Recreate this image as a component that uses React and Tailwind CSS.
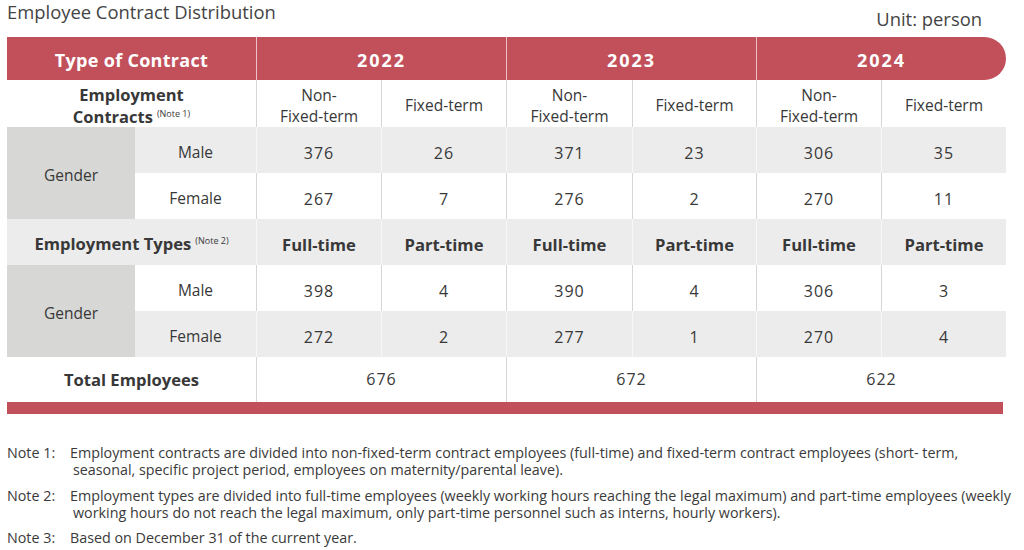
import React from "react";

const cols = "grid grid-cols-[128px_121px_125px_125px_126px_124px_125px_125px]";
const line = "border-l border-[#d6d6d6]";
const grayLine = "border-l border-[#f7f7f7]";

function Sup({ children }) {
  return (
    <span className="relative -top-[6px] ml-1 text-[9px] leading-none font-normal tracking-normal">
      {children}
    </span>
  );
}

function Cell({ className = "", children }) {
  return (
    <div className={`flex items-center justify-center text-center ${className}`}>
      {children}
    </div>
  );
}

function GenderBlock({ rows, firstGray }) {
  const [male, female] = rows;
  const bgMale = firstGray ? "bg-[#ececec]" : "bg-white";
  const bgFemale = firstGray ? "bg-white" : "bg-[#ececec]";
  const lnMale = firstGray ? grayLine : line;
  const lnFemale = firstGray ? line : grayLine;
  return (
    <>
      <Cell className="row-span-2 bg-[#d7d7d5] pt-1">Gender</Cell>
      <Cell className={`${bgMale} pt-1`}>Male</Cell>
      {male.map((v, i) => (
        <Cell key={"m" + i} className={`${bgMale} ${lnMale} pt-1.5 text-[16px] tracking-[1px]`}>
          {v}
        </Cell>
      ))}
      <Cell className={`${bgFemale} pt-1`}>Female</Cell>
      {female.map((v, i) => (
        <Cell key={"f" + i} className={`${bgFemale} ${lnFemale} pt-1.5 text-[16px] tracking-[1px]`}>
          {v}
        </Cell>
      ))}
    </>
  );
}

export default function App() {
  const years = ["2022", "2023", "2024"];
  return (
    <div className="w-[1024px] h-[550px] bg-white text-[#383838] font-['Open_Sans',sans-serif] overflow-hidden">
      <div className="flex justify-between h-[37px]">
        <h1 className="pl-[7px] text-[18.4px] leading-[24px] text-[#444]">
          Employee Contract Distribution
        </h1>
        <div className="pr-[42px] pt-[7px] text-[18.4px] leading-[24px] text-[#444]">
          Unit: person
        </div>
      </div>

      <div className="ml-[7px] w-[999px]">
        <div className="flex h-[43px] bg-[#c1505b] rounded-r-[22px] text-white font-bold">
          <div className="w-[249px] flex items-center justify-center pt-1 text-[18px] tracking-[0.3px]">
            Type of Contract
          </div>
          {years.map((y) => (
            <div
              key={y}
              className="w-[250px] border-l border-[#eec3c7] flex items-center justify-center pt-1 text-[18px] tracking-[2px]"
            >
              {y}
            </div>
          ))}
        </div>

        <div className={`${cols} grid-rows-[47px_46px_46px_46px_46px_46px_45px] text-[15.5px] leading-[21px]`}>
          <Cell className="col-span-2 font-bold text-[16.5px] leading-[22px] bg-white pt-1">
            <div>
              Employment
              <br />
              Contracts
              <Sup>(Note 1)</Sup>
            </div>
          </Cell>
          {years.map((y) => (
            <React.Fragment key={"h" + y}>
              <Cell className={`${line} bg-white pt-1`}>
                <div>
                  Non-
                  <br />
                  Fixed-term
                </div>
              </Cell>
              <Cell className={`${line} bg-white pt-1`}>Fixed-term</Cell>
            </React.Fragment>
          ))}

          <GenderBlock
            firstGray
            rows={[
              ["376", "26", "371", "23", "306", "35"],
              ["267", "7", "276", "2", "270", "11"],
            ]}
          />

          <Cell className="col-span-2 font-bold text-[16.6px] bg-[#ececec] pt-0.5">
            <div>
              Employment Types<Sup>(Note 2)</Sup>
            </div>
          </Cell>
          {years.map((y) => (
            <React.Fragment key={"t" + y}>
              <Cell className={`${grayLine} bg-[#ececec] font-bold text-[16.6px] pt-1`}>Full-time</Cell>
              <Cell className={`${grayLine} bg-[#ececec] font-bold text-[16.6px] pt-1`}>Part-time</Cell>
            </React.Fragment>
          ))}

          <GenderBlock
            rows={[
              ["398", "4", "390", "4", "306", "3"],
              ["272", "2", "277", "1", "270", "4"],
            ]}
          />

          <Cell className="col-span-2 font-bold text-[16.6px] bg-white">Total Employees</Cell>
          <Cell className={`col-span-2 ${line} bg-white text-[16px] tracking-[1px]`}>676</Cell>
          <Cell className={`col-span-2 ${line} bg-white text-[16px] tracking-[1px]`}>672</Cell>
          <Cell className={`col-span-2 ${line} bg-white text-[16px] tracking-[1px]`}>622</Cell>
        </div>

        <div className="h-[12px] w-[996px] bg-[#c1505b]" />
      </div>

      <div className="mt-[30px] pl-[7px] text-[14.3px] leading-[17px] text-[#3a3a3a]">
        <div className="flex">
          <div className="w-[63px] shrink-0">Note 1:</div>
          <div>
            <div className="whitespace-nowrap">
              Employment contracts are divided into non-fixed-term contract employees (full-time) and fixed-term contract employees (short- term,
            </div>
            <div className="whitespace-nowrap pl-[3px]">
              seasonal, specific project period, employees on maternity/parental leave).
            </div>
          </div>
        </div>
        <div className="flex mt-[9px]">
          <div className="w-[63px] shrink-0">Note 2:</div>
          <div>
            <div className="whitespace-nowrap">
              Employment types are divided into full-time employees (weekly working hours reaching the legal maximum) and part-time employees (weekly
            </div>
            <div className="whitespace-nowrap pl-[3px]">
              working hours do not reach the legal maximum, only part-time personnel such as interns, hourly workers).
            </div>
          </div>
        </div>
        <div className="flex mt-[8px]">
          <div className="w-[63px] shrink-0">Note 3:</div>
          <div>Based on December 31 of the current year.</div>
        </div>
      </div>
    </div>
  );
}
